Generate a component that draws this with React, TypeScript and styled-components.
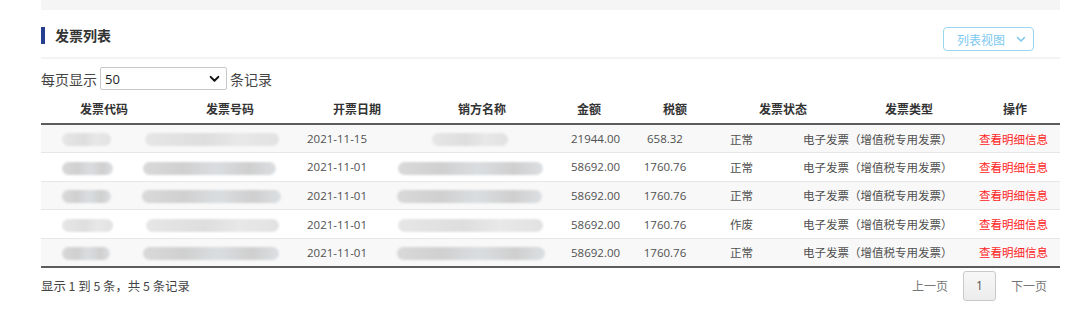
import React from 'react';
import styled, { createGlobalStyle } from 'styled-components';

const GlobalStyle = createGlobalStyle`
  body {
    margin: 0;
    background: #fff;
    font-family: 'Open Sans', 'Noto Sans CJK SC', sans-serif;
    color: #333;
  }
`;

const Page = styled.div`
  width: 1019px;
  margin-left: 41px;
  height: 329px;
  overflow: hidden;
`;

const TopStrip = styled.div`
  height: 10px;
  background: #f5f5f5;
`;

const PanelHeader = styled.header`
  display: flex;
  justify-content: space-between;
  align-items: flex-start;
  height: 30px;
  padding-top: 17px;
  border-bottom: 2px solid #f3f3f3;
`;

const Title = styled.h2`
  margin: 0;
  height: 17px;
  line-height: 17px;
  padding-left: 10px;
  border-left: 4px solid #263f8e;
  font-size: 14px;
  font-weight: bold;
  color: #333;
  font-family: 'Noto Sans CJK SC', sans-serif;
`;

const ViewButton = styled.button`
  display: flex;
  align-items: center;
  justify-content: space-between;
  width: 91px;
  height: 24px;
  margin-right: 26px;
  padding: 0 7px 0 13px;
  background: #fff;
  border: 1px solid #98d6f1;
  border-radius: 4px;
  color: #7cc8ee;
  font-size: 12px;
  font-family: 'Noto Sans CJK SC', sans-serif;
  box-sizing: border-box;
`;

const Toolbar = styled.div`
  display: flex;
  align-items: center;
  gap: 3px;
  height: 23px;
  margin-top: 8px;
  font-size: 14px;
  color: #444;
  font-family: 'Noto Sans CJK SC', sans-serif;
`;

const SelectBox = styled.div`
  display: flex;
  align-items: center;
  justify-content: space-between;
  box-sizing: border-box;
  width: 127px;
  height: 23px;
  padding: 0 6px 0 4px;
  border: 1px solid #c8c8c8;
  border-radius: 2px;
  font-size: 13px;
  color: #222;
  font-family: 'Open Sans', sans-serif;
`;

const Table = styled.table`
  width: 1019px;
  margin-top: 6px;
  border-collapse: collapse;
  table-layout: fixed;
  border-bottom: 2px solid #5c5c5c;
`;

const HeadCell = styled.th<{ $pad: number }>`
  height: 25px;
  padding: 0 0 2px ${p => p.$pad}px;
  text-align: left;
  white-space: nowrap;
  font-size: 12px;
  font-weight: bold;
  color: #333;
  font-family: 'Noto Sans CJK SC', sans-serif;
  border-bottom: 2px solid #5c5c5c;
  overflow: visible;
`;

const Row = styled.tr<{ $striped: boolean }>`
  height: 28.6px;
  background: ${p => (p.$striped ? '#f8f8f8' : '#fff')};
  border-top: 1px solid #e6e6e6;
  &:first-child {
    border-top: none;
  }
`;

const Cell = styled.td<{ $pad?: number; $align?: string; $right?: number; $red?: boolean }>`
  padding: 0 ${p => p.$right || 0}px 0 ${p => p.$pad || 0}px;
  text-align: ${p => p.$align || 'left'};
  white-space: nowrap;
  font-size: 11.5px;
  color: ${p => (p.$red ? '#ff2424' : '#505050')};
  vertical-align: middle;
  overflow: visible;
`;

const Blob = styled.span<{ $w: number; $shift?: number; $light?: boolean }>`
  display: inline-block;
  vertical-align: middle;
  width: ${p => p.$w}px;
  height: 13px;
  margin-left: ${p => p.$shift || 0}px;
  border-radius: 7px;
  background: ${p =>
    p.$light
      ? 'linear-gradient(90deg, #e6e6e6, #dedede 45%, #e8e8e8 70%, #e2e2e2)'
      : 'linear-gradient(90deg, #d9d9d9, #d0d0d0 30%, #dadde0 55%, #cfcfcf 80%, #dcdfe2)'};
  filter: blur(1.2px);
`;

const Footer = styled.footer`
  display: flex;
  justify-content: space-between;
  align-items: center;
  height: 30px;
  margin-top: 3px;
  font-size: 12.4px;
  color: #444;
  font-family: 'Noto Sans CJK SC', sans-serif;
`;

const Pager = styled.nav`
  display: flex;
  align-items: center;
  gap: 15px;
  padding-right: 13px;
`;

const PageLink = styled.span`
  color: #777;
  font-size: 12px;
`;

const PageNumber = styled.span`
  display: flex;
  align-items: center;
  justify-content: center;
  box-sizing: border-box;
  width: 33px;
  height: 30px;
  border: 1px solid #c9c9c9;
  border-radius: 3px;
  background: linear-gradient(#f7f7f7, #ececec);
  color: #555;
  font-size: 12px;
  font-family: 'Open Sans', sans-serif;
`;

const Chevron = ({ size, color, stroke }: { size: number; color: string; stroke: number }) => (
  <svg width={size} height={size} viewBox="0 0 10 10">
    <path d="M1.5 3.5 L5 7 L8.5 3.5" fill="none" stroke={color} strokeWidth={stroke} strokeLinecap="round" strokeLinejoin="round" />
  </svg>
);

const columns = [
  { title: '发票代码', width: 89, pad: 39 },
  { title: '发票号码', width: 162, pad: 76 },
  { title: '开票日期', width: 98, pad: 41 },
  { title: '销方名称', width: 165, pad: 68 },
  { title: '金额', width: 75, pad: 22 },
  { title: '税额', width: 90, pad: 33 },
  { title: '发票状态', width: 75, pad: 39 },
  { title: '发票类型', width: 175, pad: 90 },
  { title: '操作', width: 90, pad: 33 },
];

const rows = [
  { code: 49, num: 134, numShift: 3, seller: 76, sellerShift: 35, date: '2021-11-15', amount: '21944.00', tax: '658.32', status: '正常', light: true },
  { code: 51, num: 133, numShift: 1, seller: 145, sellerShift: 1, date: '2021-11-01', amount: '58692.00', tax: '1760.76', status: '正常' },
  { code: 49, num: 139, numShift: 0, seller: 145, sellerShift: 0, date: '2021-11-01', amount: '58692.00', tax: '1760.76', status: '正常' },
  { code: 51, num: 133, numShift: 4, seller: 145, sellerShift: 1, date: '2021-11-01', amount: '58692.00', tax: '1760.76', status: '作废', light: true },
  { code: 48, num: 136, numShift: 1, seller: 148, sellerShift: 0, date: '2021-11-01', amount: '58692.00', tax: '1760.76', status: '正常' },
];

export default function App() {
  return (
    <Page>
      <GlobalStyle />
      <TopStrip />
      <PanelHeader>
        <Title>发票列表</Title>
        <ViewButton>
          列表视图
          <Chevron size={10} color="#7cc8ee" stroke={1.6} />
        </ViewButton>
      </PanelHeader>

      <Toolbar>
        <span>每页显示</span>
        <SelectBox>
          <span>50</span>
          <Chevron size={11} color="#111" stroke={1.8} />
        </SelectBox>
        <span>条记录</span>
      </Toolbar>

      <Table>
        <colgroup>
          {columns.map(c => (
            <col key={c.title} style={{ width: c.width }} />
          ))}
        </colgroup>
        <thead>
          <tr>
            {columns.map(c => (
              <HeadCell key={c.title} $pad={c.pad}>
                {c.title}
              </HeadCell>
            ))}
          </tr>
        </thead>
        <tbody>
          {rows.map((r, i) => (
            <Row key={i} $striped={i % 2 === 0}>
              <Cell $pad={21}>
                <Blob $w={r.code} $light={r.light} />
              </Cell>
              <Cell $pad={12}>
                <Blob $w={r.num} $shift={r.numShift} $light={r.light} />
              </Cell>
              <Cell $pad={15}>{r.date}</Cell>
              <Cell $pad={7}>
                <Blob $w={r.seller} $shift={r.sellerShift} $light={r.light} />
              </Cell>
              <Cell $pad={16}>{r.amount}</Cell>
              <Cell $align="center" $right={20}>
                {r.tax}
              </Cell>
              <Cell $pad={10}>{r.status}</Cell>
              <Cell $pad={8}>电子发票（增值税专用发票）</Cell>
              <Cell $pad={9} $red>
                查看明细信息
              </Cell>
            </Row>
          ))}
        </tbody>
      </Table>

      <Footer>
        <span>显示 1 到 5 条，共 5 条记录</span>
        <Pager>
          <PageLink>上一页</PageLink>
          <PageNumber>1</PageNumber>
          <PageLink>下一页</PageLink>
        </Pager>
      </Footer>
    </Page>
  );
}
